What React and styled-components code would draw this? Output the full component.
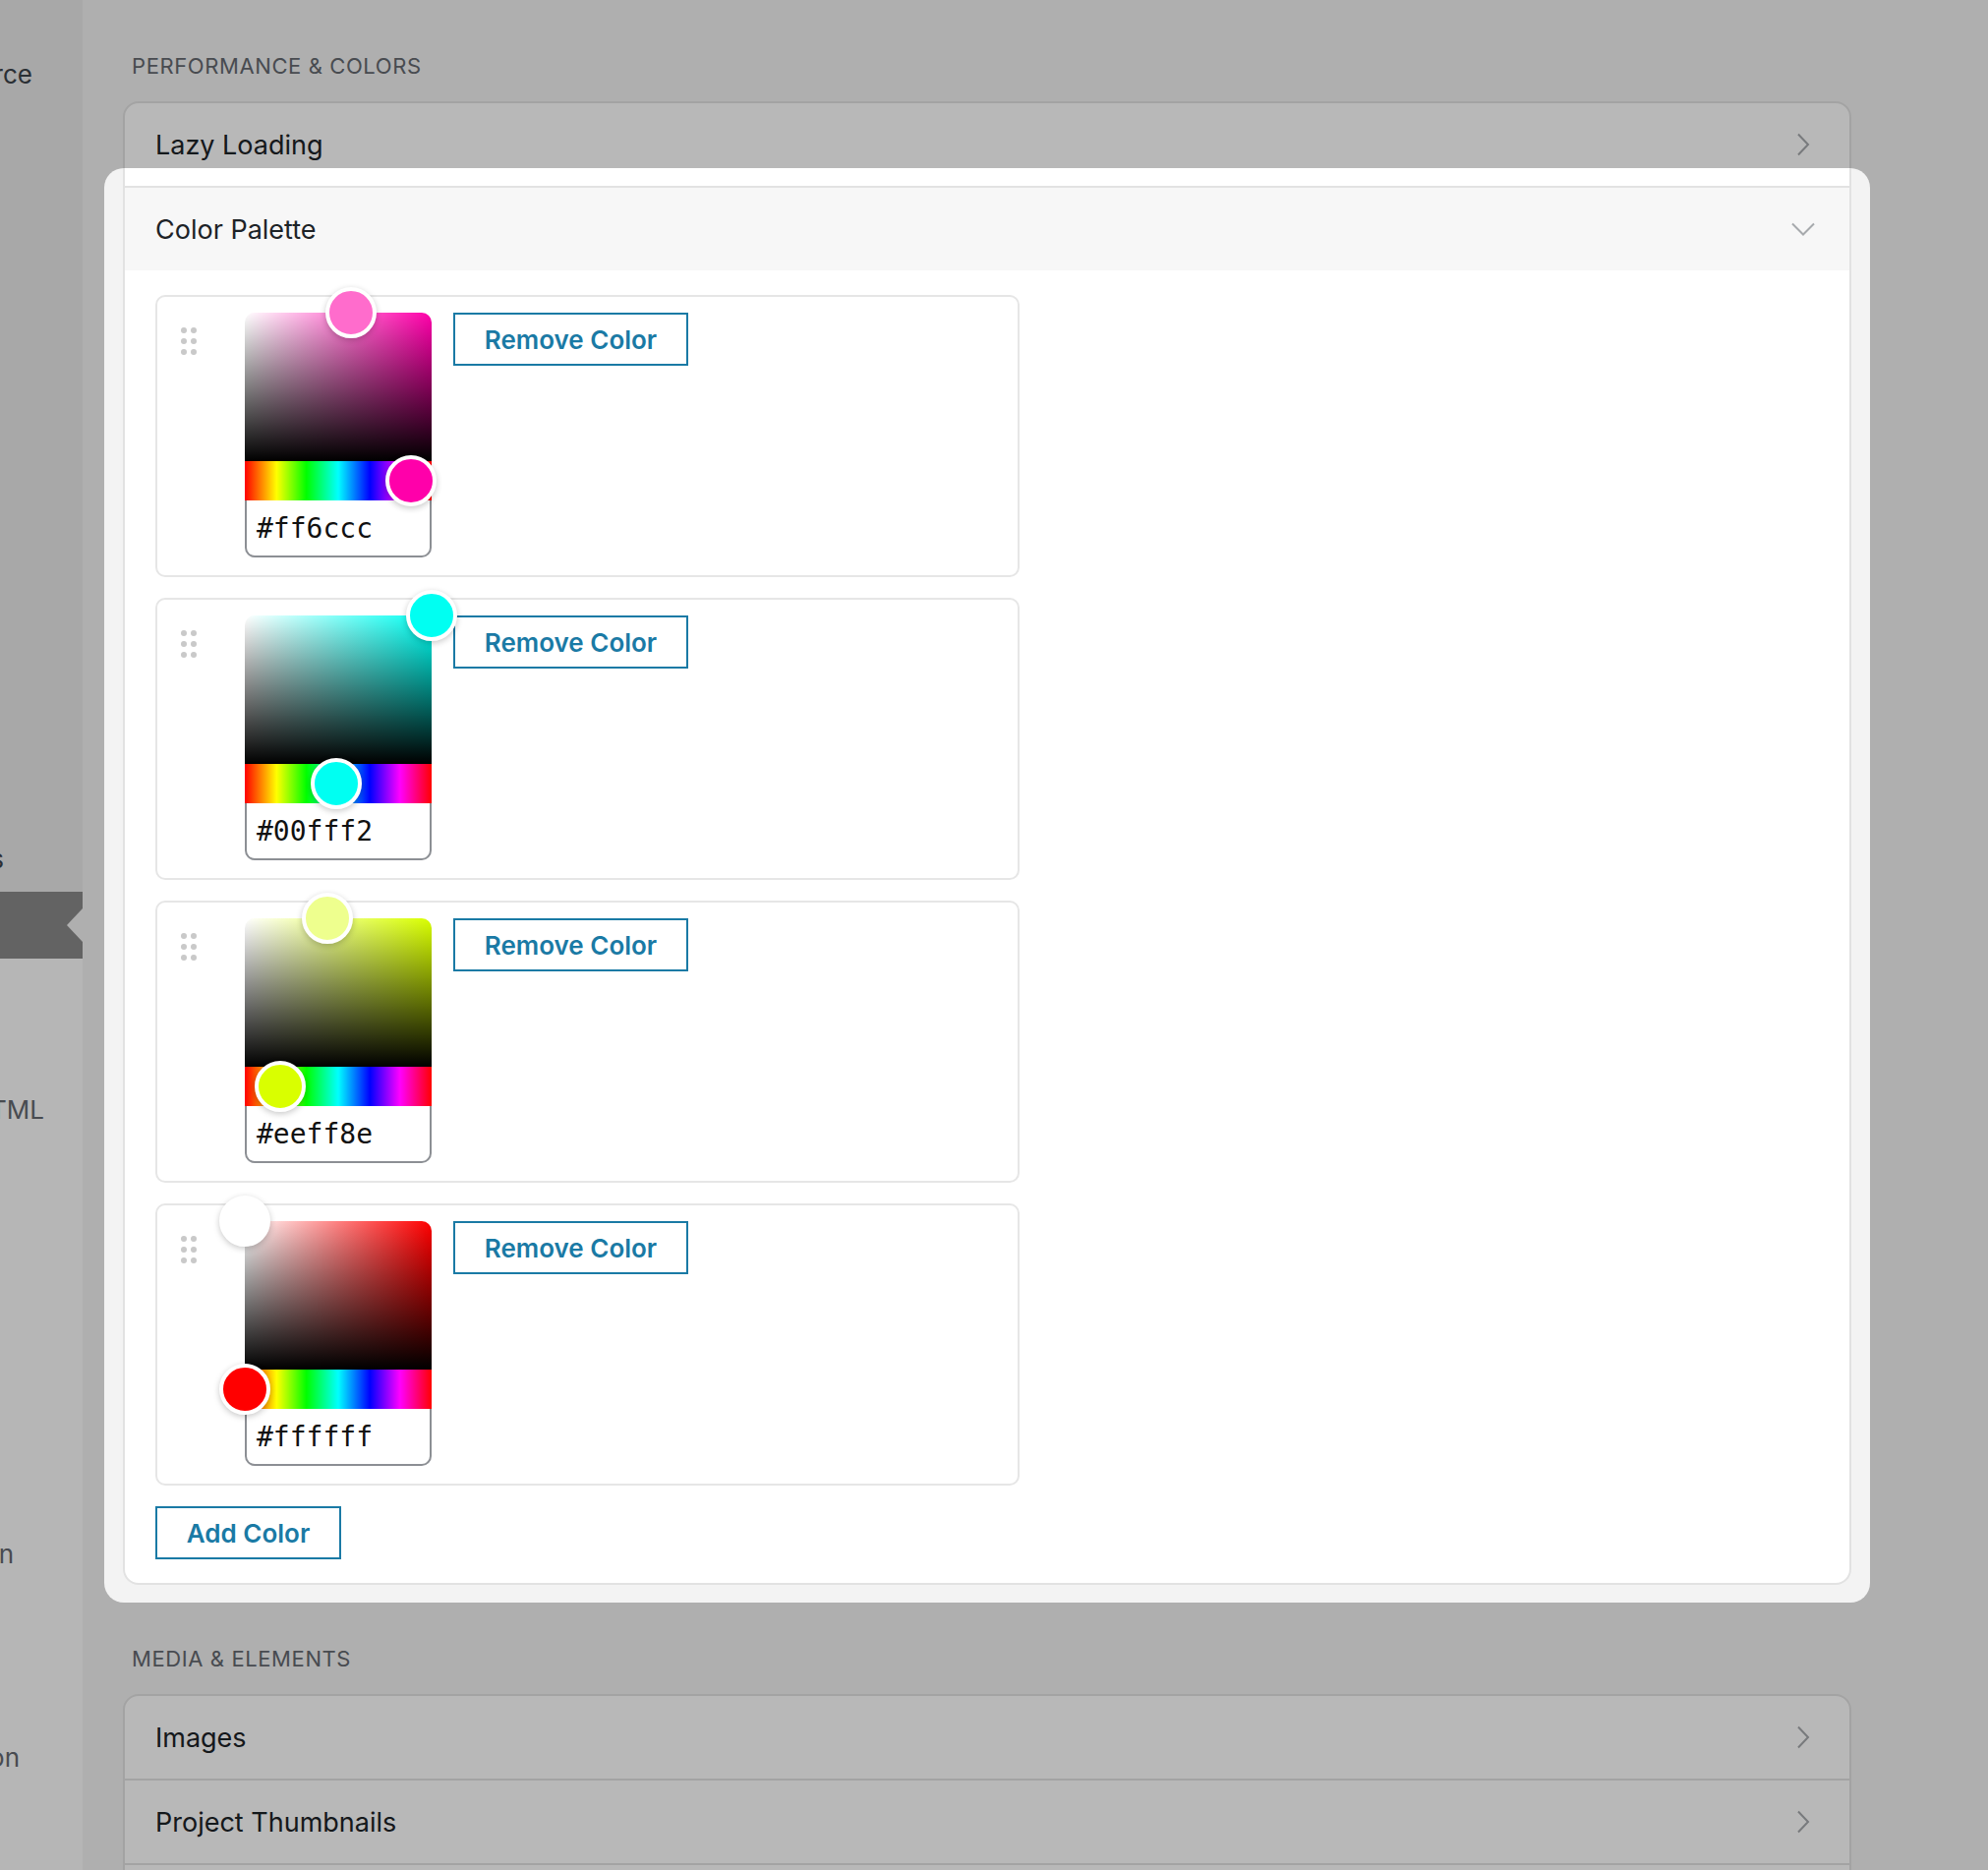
import React from "react";
import styled, { createGlobalStyle } from "styled-components";

const GlobalStyle = createGlobalStyle`
  html, body {
    margin: 0;
    padding: 0;
    background: #f3f3f3;
    font-family: Inter, "Liberation Sans", sans-serif;
    color: #1d2327;
  }
  * { box-sizing: border-box; }
`;

const Page = styled.div`
  display: flex;
  height: 100vh;
  overflow: hidden;
  background: #f3f3f3;
`;

const Sidebar = styled.nav`
  width: 84px;
  flex-shrink: 0;
  display: flex;
  flex-direction: column;
  overflow: hidden;
`;

const SideGroup = styled.div`
  display: flex;
  flex-direction: column;
  justify-content: ${(p) => (p.$spread ? "space-between" : "flex-start")};
  height: ${(p) => (p.$height ? `${p.$height}px` : "auto")};
  flex: ${(p) => (p.$fill ? 1 : "none")};
  padding-top: ${(p) => p.$pt || 0}px;
  background: ${(p) => p.$bg};
`;

const SideItem = styled.div`
  height: 68px;
  flex-shrink: 0;
  display: flex;
  align-items: center;
  justify-content: flex-end;
  margin-top: ${(p) => p.$mt || 0}px;
  padding-right: ${(p) => p.$pr}px;
  font-size: 26px;
  color: ${(p) => p.$color || "#3c434a"};
  white-space: nowrap;
  span { flex-shrink: 0; }
`;

const CurrentItem = styled.div`
  position: relative;
  height: 68px;
  flex-shrink: 0;
  background: #8a8a8a;
  &::after {
    content: "";
    position: absolute;
    right: 0;
    top: 50%;
    transform: translateY(-50%);
    border-style: solid;
    border-width: 17px 16px 17px 0;
    border-color: transparent #f3f3f3 transparent transparent;
  }
`;

const Main = styled.main`
  flex: 1;
  padding: 55px 139px 0 41px;
`;

const SectionLabel = styled.h2`
  margin: ${(p) => (p.$spaced ? "63px" : "0")} 0 24px 9px;
  font-size: 22px;
  line-height: 24px;
  font-weight: 400;
  letter-spacing: 0.6px;
  text-transform: uppercase;
  color: #646970;
`;

const Accordion = styled.div`
  background: #fff;
  border: 2px solid #e2e2e2;
  border-radius: 16px;
`;

const Item = styled.div`
  position: relative;
  & + & { border-top: 2px solid #e2e2e2; }
  ${(p) =>
    p.$spot &&
    `
    &::after {
      content: "";
      position: absolute;
      top: -20px;
      bottom: -20px;
      left: -21px;
      right: -21px;
      border-radius: 20px;
      box-shadow: 0 0 0 4000px rgba(0, 0, 0, 0.28);
      pointer-events: none;
      z-index: 10;
    }
  `}
`;

const RowHeader = styled.div`
  height: 84px;
  display: flex;
  align-items: center;
  justify-content: space-between;
  padding: 0 35px 0 31px;
  font-size: 27px;
  color: #1d2327;
  background: ${(p) => (p.$active ? "#f7f7f7" : "transparent")};
  border-radius: ${(p) => (p.$first ? "14px 14px 0 0" : "0")};
`;

const IconBox = styled.span`
  width: 24px;
  height: 24px;
  display: flex;
  align-items: center;
  justify-content: center;
`;

const Body = styled.div`
  display: flex;
  flex-direction: column;
  align-items: flex-start;
  gap: 21px;
  padding: 25px 31px 24px;
`;

const ColorCard = styled.div`
  width: 879px;
  display: flex;
  align-items: flex-start;
  padding: 16px 0 18px 24px;
  border: 2px solid #e6e6e6;
  border-radius: 10px;
  background: #fff;
`;

const Handle = styled.div`
  width: 65px;
  padding-top: 15px;
  flex-shrink: 0;
  display: flex;
`;

const Picker = styled.div`
  width: 190px;
  flex-shrink: 0;
  margin-right: 22px;
  display: flex;
  flex-direction: column;
`;

const SatArea = styled.div`
  position: relative;
  height: 151px;
  border-radius: 10px 10px 0 0;
  background: linear-gradient(to top, #000, rgba(0, 0, 0, 0)),
    linear-gradient(to right, #fff, ${(p) => `hsl(${p.$hue}, 100%, 50%)`});
`;

const HueBar = styled.div`
  position: relative;
  height: 40px;
  background: linear-gradient(
    to right,
    #f00 0%,
    #ff0 17%,
    #0f0 33%,
    #0ff 50%,
    #00f 67%,
    #f0f 83%,
    #f00 100%
  );
`;

const Knob = styled.span`
  position: absolute;
  width: 52px;
  height: 52px;
  border-radius: 50%;
  border: 4px solid #fff;
  background: ${(p) => p.$color};
  box-shadow: 0 2px 6px rgba(0, 0, 0, 0.22);
  transform: translate(-50%, -50%);
  z-index: 2;
`;

const HexInput = styled.div`
  height: 58px;
  display: flex;
  align-items: center;
  padding-left: 10px;
  border: 2px solid #8c8f94;
  border-top: none;
  border-radius: 0 0 10px 10px;
  font-family: "DejaVu Sans Mono", "Liberation Mono", monospace;
  font-size: 28px;
  color: #111;
`;

const OutlineButton = styled.button`
  height: 54px;
  width: ${(p) => p.$width}px;
  padding: 0;
  flex-shrink: 0;
  background: #fff;
  border: 2px solid #1a7aa5;
  border-radius: 0;
  color: #1a7aa5;
  font-family: Inter, "Liberation Sans", sans-serif;
  font-size: 26px;
  font-weight: 600;
  cursor: pointer;
`;

const ChevronRight = () => (
  <svg width="14" height="24" viewBox="0 0 14 24">
    <path d="M2 1.5 L12 12 L2 22.5" fill="none" stroke="#a7aaad" strokeWidth="2" />
  </svg>
);

const ChevronDown = () => (
  <svg width="24" height="14" viewBox="0 0 24 14">
    <path d="M1 1.5 L12 12.5 L23 1.5" fill="none" stroke="#a7aaad" strokeWidth="2" />
  </svg>
);

const DragDots = () => (
  <svg width="16" height="28" viewBox="0 0 16 28">
    {[3, 14, 25].map((y) =>
      [3, 13].map((x) => <circle key={`${x}-${y}`} cx={x} cy={y} r="3" fill="#c9c9c9" />)
    )}
  </svg>
);

const palette = [
  { hex: "#ff6ccc", hue: 320, s: 0.57, v: 1 },
  { hex: "#00fff2", hue: 177, s: 1, v: 1 },
  { hex: "#eeff8e", hue: 69, s: 0.44, v: 1 },
  { hex: "#ffffff", hue: 0, s: 0, v: 1 },
];

function ColorRow({ color }) {
  return (
    <ColorCard>
      <Handle>
        <DragDots />
      </Handle>
      <Picker>
        <SatArea $hue={color.hue}>
          <Knob
            $color={color.hex}
            style={{ left: `${color.s * 100}%`, top: `${(1 - color.v) * 100}%` }}
          />
        </SatArea>
        <HueBar>
          <Knob
            $color={`hsl(${color.hue}, 100%, 50%)`}
            style={{ left: `${(color.hue / 360) * 100}%`, top: "50%" }}
          />
        </HueBar>
        <HexInput>{color.hex}</HexInput>
      </Picker>
      <OutlineButton $width={239}>Remove Color</OutlineButton>
    </ColorCard>
  );
}

export default function App() {
  return (
    <>
      <GlobalStyle />
      <Page>
        <Sidebar>
          <SideGroup $height={907} $pt={41} $spread $bg="#e9e9e9">
            <SideItem $pr={51}>
              <span>Resource</span>
            </SideItem>
            <SideItem $pr={80}>
              <span>Projects</span>
            </SideItem>
          </SideGroup>
          <CurrentItem />
          <SideGroup $fill $bg="#fcfcfc">
            <SideItem $mt={119} $pr={39} $color="#646970">
              <span>Custom HTML</span>
            </SideItem>
            <SideItem $mt={384} $pr={70} $color="#646970">
              <span>Navigation</span>
            </SideItem>
            <SideItem $mt={139} $pr={64} $color="#646970">
              <span>Translation</span>
            </SideItem>
          </SideGroup>
        </Sidebar>

        <Main>
          <SectionLabel>Performance &amp; Colors</SectionLabel>
          <Accordion>
            <Item>
              <RowHeader $first>
                Lazy Loading
                <IconBox>
                  <ChevronRight />
                </IconBox>
              </RowHeader>
            </Item>
            <Item $spot>
              <RowHeader $active>
                Color Palette
                <IconBox>
                  <ChevronDown />
                </IconBox>
              </RowHeader>
              <Body>
                {palette.map((c) => (
                  <ColorRow key={c.hex} color={c} />
                ))}
                <OutlineButton $width={189}>Add Color</OutlineButton>
              </Body>
            </Item>
          </Accordion>

          <SectionLabel $spaced>Media &amp; Elements</SectionLabel>
          <Accordion>
            {["Images", "Project Thumbnails", "Videos", "Buttons"].map((t, i) => (
              <Item key={t}>
                <RowHeader $first={i === 0}>
                  {t}
                  <IconBox>
                    <ChevronRight />
                  </IconBox>
                </RowHeader>
              </Item>
            ))}
          </Accordion>
        </Main>
      </Page>
    </>
  );
}
